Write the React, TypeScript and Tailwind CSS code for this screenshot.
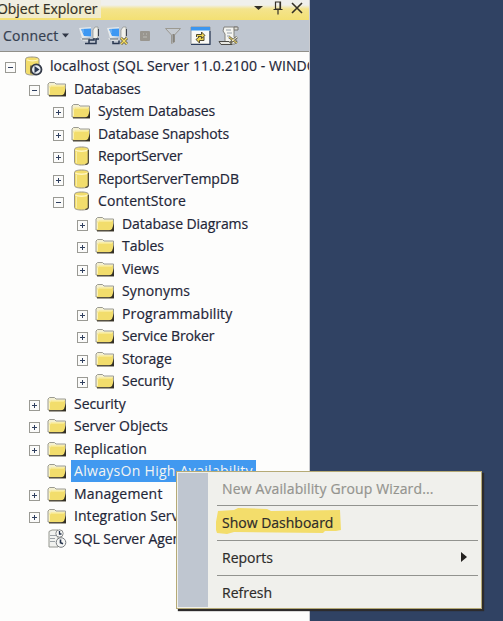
import React from "react";

type Kind = "server" | "folder" | "db" | "agent";
type Row = {
  label: string;
  depth: 0 | 1 | 2 | 3;
  kind: Kind;
  box?: "+" | "-";
  selected?: boolean;
  tracking?: string;
};

const rows: Row[] = [
  { label: "localhost (SQL Server 11.0.2100 - WINDOWS)", depth: 0, kind: "server", box: "-", tracking: "tracking-[0.07px]" },
  { label: "Databases", depth: 1, kind: "folder", box: "-", tracking: "tracking-[-0.2px]" },
  { label: "System Databases", depth: 2, kind: "folder", box: "+", tracking: "tracking-[-0.12px]" },
  { label: "Database Snapshots", depth: 2, kind: "folder", box: "+", tracking: "tracking-[-0.12px]" },
  { label: "ReportServer", depth: 2, kind: "db", box: "+", tracking: "tracking-[-0.15px]" },
  { label: "ReportServerTempDB", depth: 2, kind: "db", box: "+", tracking: "tracking-[-0.08px]" },
  { label: "ContentStore", depth: 2, kind: "db", box: "-", tracking: "tracking-[0.08px]" },
  { label: "Database Diagrams", depth: 3, kind: "folder", box: "+", tracking: "tracking-[-0.08px]" },
  { label: "Tables", depth: 3, kind: "folder", box: "+" },
  { label: "Views", depth: 3, kind: "folder", box: "+" },
  { label: "Synonyms", depth: 3, kind: "folder", tracking: "tracking-[0.15px]" },
  { label: "Programmability", depth: 3, kind: "folder", box: "+", tracking: "tracking-[0.12px]" },
  { label: "Service Broker", depth: 3, kind: "folder", box: "+", tracking: "tracking-[-0.12px]" },
  { label: "Storage", depth: 3, kind: "folder", box: "+" },
  { label: "Security", depth: 3, kind: "folder", box: "+" },
  { label: "Security", depth: 1, kind: "folder", box: "+" },
  { label: "Server Objects", depth: 1, kind: "folder", box: "+" },
  { label: "Replication", depth: 1, kind: "folder", box: "+", tracking: "tracking-[0.08px]" },
  { label: "AlwaysOn High Availability", depth: 1, kind: "folder", selected: true, tracking: "tracking-[0.3px]" },
  { label: "Management", depth: 1, kind: "folder", box: "+", tracking: "tracking-[0.2px]" },
  { label: "Integration Services Catalogs", depth: 1, kind: "folder", box: "+", tracking: "tracking-[0.05px]" },
  { label: "SQL Server Agent", depth: 1, kind: "agent" },
];

const indent = { 0: "pl-[5px]", 1: "pl-[29px]", 2: "pl-[53px]", 3: "pl-[77px]" };

function Expander({ sign }: { sign?: "+" | "-" }) {
  return (
    <svg width="11" height="11" viewBox="0 0 11 11" className="mt-[3px] shrink-0" shapeRendering="crispEdges">
      {sign && (
        <>
          <rect x="0.5" y="0.5" width="10" height="10" fill="#fbfbfa" stroke="#9a9a94" />
          <path d="M3 5.5h5" stroke="#304060" />
          {sign === "+" && <path d="M5.5 3v5" stroke="#304060" />}
        </>
      )}
    </svg>
  );
}

function Folder() {
  return (
    <svg width="20" height="16" viewBox="0 0 20 16">
      <path d="M1 14V3l1.500-1.500h5L9 3h9.500v11z" fill="#f4f0d0" stroke="#9b9b92" />
      <path d="M2 14V6L4 4.500h14V14z" fill="#f2dd6c" />
      <path d="M2.500 13V6.500L4.500 5H17" fill="none" stroke="#fcf3b4" />
      <path d="M2 14.800h17" stroke="#4a4434" strokeWidth="1.400" />
      <path d="M19 7v8h-5l3-2z" fill="#343026" />
    </svg>
  );
}

function Database() {
  return (
    <svg width="20" height="20" viewBox="0 0 20 20">
      <path d="M3.500 3.500C3.500 2 6 1 10.500 1s7 1 7 2.500v13c0 1.500-2.500 2.500-7 2.500s-7-1-7-2.500z" fill="#f2dd6c" stroke="#97948a" />
      <path d="M4.500 4c2 1.700 10 1.700 12 0" fill="none" stroke="#fff6c2" strokeWidth="1.400" />
      <path d="M5.500 6v11" stroke="#f8eda6" />
      <path d="M17.300 4v12.500c0 1-1.500 1.700-3 2" fill="none" stroke="#4e4939" strokeWidth="1.200" />
    </svg>
  );
}

function Server() {
  return (
    <svg width="20" height="21" viewBox="0 0 20 21">
      <path d="M2.500 3.500C2.500 1.500 5 1 9 1s7 .7 7 2.500v13c0 1.500-3 2.500-7 2.500s-6.500-1-6.500-2.500z" fill="#f2dd6c" stroke="#97948a" />
      <path d="M4 3.800c2 1.300 9 1.300 11 0" fill="none" stroke="#fff6c2" strokeWidth="1.300" />
      <circle cx="13.300" cy="13.500" r="5.200" fill="#e8edf1" stroke="#343b49" strokeWidth="1.800" />
      <path d="M11.500 10v7l5-3.500z" fill="#293650" />
      <path d="M8 9.500v8" stroke="#464233" strokeWidth="1.300" />
    </svg>
  );
}

function Agent() {
  return (
    <svg width="20" height="20" viewBox="0 0 20 20">
      <path d="M2 2.500L5 1h6v17H2z" fill="#f1f2ef" stroke="#94968f" />
      <path d="M3 6.500h6M3 9.500h5M3 12.500h5" stroke="#9ba1a6" />
      <circle cx="12.500" cy="4.500" r="3.700" fill="#f6f7f5" stroke="#888b8c" />
      <path d="M12.500 2v3h2" fill="none" stroke="#26334c" strokeWidth="1.300" />
      <circle cx="14" cy="13.500" r="4.800" fill="#f5f6f4" stroke="#777b80" />
      <path d="M13.500 10.500v3.300l2.500 1" fill="none" stroke="#26334c" strokeWidth="1.600" />
    </svg>
  );
}

const icons = { folder: Folder, db: Database, server: Server, agent: Agent };

function TreeRow({ row }: { row: Row }) {
  const Icon = icons[row.kind];
  return (
    <div className={`flex h-[22.5px] w-full items-center whitespace-nowrap ${indent[row.depth]}`}>
      <Expander sign={row.box} />
      <span className="ml-[7px] flex w-5 shrink-0 justify-center">
        <Icon />
      </span>
      <span
        className={`ml-1 flex h-[22px] items-center px-[3px] pb-px text-[14px] ${row.tracking ?? "tracking-[-0.05px]"} ${
          row.selected ? "bg-[#4199f0] text-[#f4f5f2]" : "text-[#1f2638] [-webkit-text-stroke:0.2px_#1f2638]"
        }`}
      >
        {row.label}
      </span>
    </div>
  );
}

function Connection({ off }: { off?: boolean }) {
  return (
    <svg width="22" height="20" viewBox="0 0 22 20">
      <path d="M0 2l12-1v10l-9 1z" fill="#e6eaec" />
      <path d="M2 3l10-.5v8L5 10z" fill="#3d98f3" />
      <path d="M2 4h3M3 6h2" stroke="#8dc1f3" />
      <path d="M1 12.500h9l2 2H4z" fill="#f4f4ef" />
      <path d="M3 13h8" stroke="#55606c" />
      <path d="M14 4l2-3h3v10l-2 2h-3z" fill="#f1f1ec" stroke="#8d8f8c" strokeWidth=".7" />
      <path d="M19.500 3v7" stroke="#404550" />
      {off ? (
        <>
          <path d="M6 15v2.500h6v-3" fill="none" stroke="#29374f" strokeWidth="1.500" />
          <path d="M14 12l6 6m0-6l-6 6" stroke="#59502f" strokeWidth="2.800" />
          <path d="M14 12l6 6m0-6l-6 6" stroke="#f3dc65" strokeWidth="1.500" />
        </>
      ) : (
        <path d="M6 17.500h11V13h3M10 17v-3h5v-2" fill="none" stroke="#29374f" strokeWidth="1.500" />
      )}
    </svg>
  );
}

function Toolbar() {
  return (
    <div className="flex h-8 items-center border-b border-[#908f89] bg-[#bfc6d0] pl-[3px]">
      <span className="w-[58px] whitespace-nowrap text-[14px] tracking-[0.2px] text-[#353f50] [-webkit-text-stroke:0.2px_#353f50]">Connect</span>
      <svg width="8" height="5" viewBox="0 0 8 5" className="ml-[1px]">
        <path d="M0 .5h7L3.500 4.500z" fill="#303746" />
      </svg>
      <span className="ml-[9px]"><Connection /></span>
      <span className="ml-[6px]"><Connection off /></span>
      <svg width="10" height="10" viewBox="0 0 10 10" className="ml-[11px]">
        <rect width="10" height="10" rx="1" fill="#99968f" />
        <path d="M3 3h1m2 0h1M3 6h4" stroke="#bdbdb8" />
      </svg>
      <svg width="18" height="18" viewBox="0 0 18 18" className="ml-[14px]">
        <path d="M1.500 1.500h15l-6 6.500v7l-3 1.500V8z" fill="#c5cad0" stroke="#9b9992" />
        <path d="M9.500 7v8" stroke="#85837d" strokeWidth="2" />
      </svg>
      <svg width="21" height="20" viewBox="0 0 21 20" className="ml-[8px]">
        <path d="M1 1h19v17H1z" fill="#f9f9f6" stroke="#8f9499" />
        <path d="M1 1h19v3.500H1z" fill="#3b96ef" />
        <path d="M1 18.500h19V5" fill="none" stroke="#2d3e5d" strokeWidth="1.200" />
        <path d="M6.500 11V8.500h5V6l3.500 3.500-3.500 3v-2H8M14 11v3.500H9.500V17L6 13.500l3-2.500" fill="#eed44f" stroke="#514a31" strokeWidth="1" />
      </svg>
      <svg width="22" height="20" viewBox="0 0 22 20" className="ml-[7px]">
        <path d="M6 1h13l-3 3v7l3 4-2 3H7V8L5 5z" fill="#f5f5f0" stroke="#82827e" />
        <path d="M16 1h4v3h-4z" fill="#deddd6" stroke="#74736d" />
        <path d="M8 4h5M9 7h5M9 10h3" stroke="#96a0aa" />
        <path d="M1 15.500h10l3 3H3z" fill="#e7e7e1" stroke="#4c4b46" />
        <path d="M11 11l8 6m0-6l-7 6" stroke="#706b58" strokeWidth="2.500" />
        <path d="M11 11l8 6" stroke="#f0d75c" />
        <path d="M19 11l-5 4" stroke="#f9f8ed" />
      </svg>
    </div>
  );
}

function MenuItem({ label, kind, size = "h-[34px]" }: { label: string; kind?: "disabled" | "marked" | "submenu"; size?: string }) {
  return (
    <div className={`relative flex items-center pb-[2px] pl-[14px] text-[14px] ${size}`}>
      {kind === "marked" && (
        <svg className="absolute left-[8px] top-[1px]" width="126" height="27" viewBox="0 0 126 27">
          <path d="M2 4L18 3l4-2 29 1 4 2 69-1 1 20-5 1-11 0-2 2-89-1-7 2-10-1-2-6z" fill="#f3dd6b" />
        </svg>
      )}
      <span
        className={`relative whitespace-nowrap ${
          kind === "disabled"
            ? "tracking-[0.13px] text-[#94948f] [-webkit-text-stroke:0.2px_#94948f]"
            : "text-[#2d2b29] [-webkit-text-stroke:0.2px_#2d2b29]"
        }`}
      >
        {label}
      </span>
      {kind === "submenu" && (
        <svg className="ml-auto mr-[11px]" width="6" height="10" viewBox="0 0 6 10">
          <path d="M0 0l6 5-6 5z" fill="#24221f" />
        </svg>
      )}
    </div>
  );
}

function ContextMenu() {
  return (
    <div className="absolute left-[176px] top-[471px] flex h-[138px] w-[306px] border border-[#b5aa76] bg-[#f0f0ec] p-px shadow-[2px_2px_1px_#2d2b2c]">
      <div className="w-[30px] shrink-0 bg-[#bfc6d0]" />
      <div className="flex-1 pr-[2px]">
        <MenuItem label="New Availability Group Wizard..." kind="disabled" size="h-8" />
        <div className="ml-[9px] h-px bg-[#92938f]" />
        <MenuItem label="Show Dashboard" kind="marked" />
        <div className="ml-[9px] h-px bg-[#92938f]" />
        <MenuItem label="Reports" kind="submenu" />
        <div className="ml-[9px] h-px bg-[#92938f]" />
        <MenuItem label="Refresh" />
      </div>
    </div>
  );
}

export default function App() {
  return (
    <div className="relative h-[621px] w-[503px] overflow-hidden bg-[#304263] font-['Open_Sans','Noto_Sans',sans-serif]">
      <div className="h-full w-[310px] overflow-hidden border-r border-[#c9cbd0] bg-[#fdfdfc]">
        <div className="flex h-5 items-center bg-[linear-gradient(#f0f0ec_0,#f0f0ec_5px,#f4e48d_9px,#f3e073_20px)]">
          <span className="-ml-[3px] -mt-[4px] h-5 whitespace-nowrap bg-[#f0eee0]/80 pr-1 text-[14px] leading-[22px] tracking-[-0.05px] text-[#343026] [-webkit-text-stroke:0.2px_#343026]">Object Explorer</span>
          <svg width="52" height="14" viewBox="0 0 52 14" className="-mt-[5px] ml-auto mr-[3px]">
            <path d="M0 5h9L4.500 9z" fill="#343026" />
            <path d="M21.500 1h5v7h-5zM19.500 8.500h9M24 9v4.500M26 1v7" fill="none" stroke="#343026" strokeWidth="1.200" />
            <path d="M38 2l10 10m0-10L38 12" stroke="#343026" strokeWidth="1.600" />
          </svg>
        </div>
        <Toolbar />
        <div className="pt-[3px]">
          {rows.map((row, i) => <TreeRow key={i} row={row} />)}
        </div>
      </div>
      <ContextMenu />
    </div>
  );
}
